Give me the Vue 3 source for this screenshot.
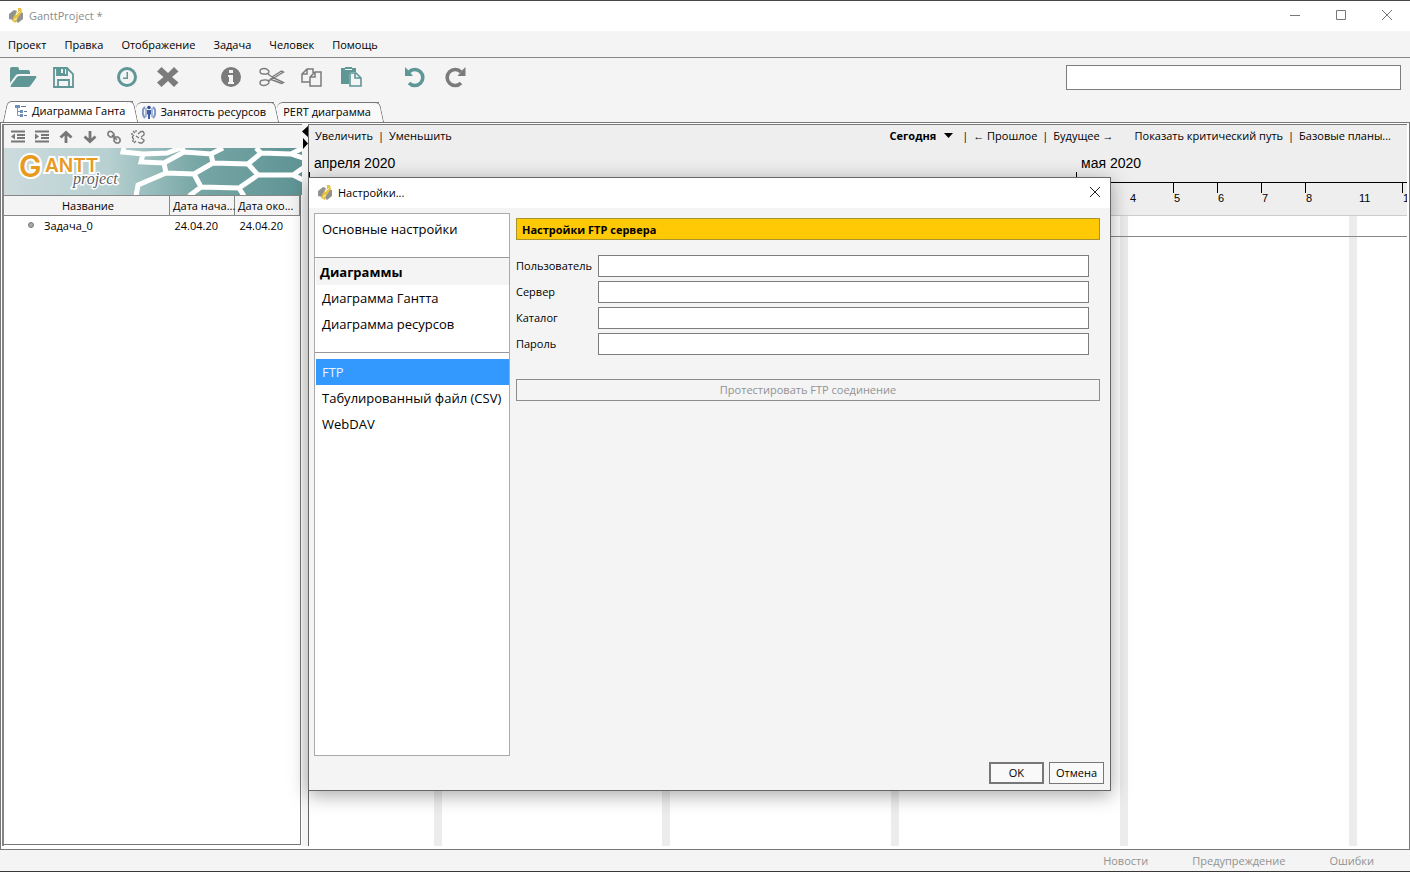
<template>
  <div class="window">
    <header class="title-bar">
      <svg class="app-icon" viewBox="0 0 16 16">
        <path d="M1 6 6 2l3 1-4 9-4-1z" fill="#92928e" />
        <path d="M11 4l4 1v6l-5 4-2-2z" fill="#92928e" />
        <path d="M10 0h3l1 4-5 7-1 4-4-2 2-5 4-4z" fill="#e6c243" />
        <path d="M8 7l4-4M6 12l3-2" stroke="#fff3b8" stroke-width="1" />
      </svg>
      <h1 class="title">GanttProject *</h1>
      <div class="window-buttons">
        <button aria-label="Свернуть"><svg viewBox="0 0 12 12"><path d="M1 5.500h10" /></svg></button>
        <button aria-label="Развернуть"><svg viewBox="0 0 12 12"><path d="M1.500 .5h9v9h-9z" /></svg></button>
        <button aria-label="Закрыть"><svg viewBox="0 0 12 12"><path d="M1 0l10 10M11 0L1 10" /></svg></button>
      </div>
    </header>

    <nav class="menu-bar">
      <button v-for="item in menu" :key="item">{{ item }}</button>
    </nav>

    <div class="toolbar">
      <div v-for="(group, i) in tools" :key="i" class="tool-group">
        <button v-for="tool in group" :key="tool.label" :class="['tool', tool.tone]" :aria-label="tool.label">
          <svg viewBox="0 0 28 24">
            <path v-for="(d, j) in tool.fill" :key="'f' + j" :d="d" fill="currentColor" fill-rule="evenodd" />
            <path v-for="(d, j) in tool.line" :key="'l' + j" :d="d" fill="none" stroke="currentColor" :stroke-width="tool.width || 2" />
          </svg>
        </button>
      </div>
      <input v-model="search" class="search" type="text" aria-label="Поиск" />
    </div>

    <div class="tabs">
      <button class="tab active">
        <svg class="tab-icon" viewBox="0 0 14 14">
          <path d="M3.500 3v8.500h3M3.500 7.500h3" fill="none" stroke="#7d93ad" />
          <path d="M1 1h5v3H1zM6 6h3v3H6zM6 10h3v3H6z" fill="#6d8fb8" />
          <path d="M7 2.500h5M10 7.500h3M10 11.500h3" stroke="#66788e" />
        </svg>
        Диаграмма Ганта
      </button>
      <button class="tab">
        <svg class="tab-icon" viewBox="0 0 14 14">
          <path d="M3 2C0 4 0 10 3 13M11 2C14 4 14 10 11 13" fill="none" stroke="#7e94c4" stroke-width="2" />
          <path d="M4 3v9M10 3v9" stroke="#a8b9dd" stroke-width="2" />
          <circle cx="7" cy="2.500" r="1.800" fill="#304d8c" />
          <path d="M5 5h4v4l-1 1v4H6v-4L5 9z" fill="#3f5fa6" />
        </svg>
        Занятость ресурсов
      </button>
      <button class="tab">PERT диаграмма</button>
    </div>

    <main class="workspace">
      <section class="task-pane">
        <div class="task-tools">
          <button v-for="tool in taskTools" :key="tool.label" :aria-label="tool.label">
            <svg viewBox="0 0 16 16">
              <path :d="tool.d" fill="none" stroke="#777" :stroke-width="tool.width" />
              <path v-if="tool.fill" :d="tool.fill" fill="#777" />
            </svg>
          </button>
        </div>
        <svg class="banner" viewBox="0 0 299 47" preserveAspectRatio="xMinYMid slice">
          <defs>
            <linearGradient id="sea" x1="0" x2="1">
              <stop offset="0" stop-color="#cddbdd" />
              <stop offset="0.35" stop-color="#b7d0d1" />
              <stop offset="0.65" stop-color="#76a6a5" />
              <stop offset="1" stop-color="#5f9494" />
            </linearGradient>
          </defs>
          <rect width="299" height="47" fill="url(#sea)" />
          <path
            d="M120 0l-1 4 20 2-2 8 23 1 20-11-2-4M139 6l24-1 14-5M180 4l27 2 12-6M160 15l2 10-28 12-2 11M162 25l28 1 19-11-2-9M209 15l35 1 13-11-5-5M257 5l30 1 12-6M287 6l12 4M244 16l10 11h35l10-7M289 27l10 5M254 27l-19 13-38-1-7-13M197 39l-12 9M235 40l5 8"
            fill="none" stroke="#fff" stroke-width="5" />
          <text class="logo-main logo-initial" x="15" y="29">G</text>
          <text class="logo-main" x="41" y="24">ANTT</text>
          <text class="logo-sub" x="69" y="36">project</text>
        </svg>
        <div class="task-table">
          <table>
            <thead>
              <tr>
                <th class="name">Название</th>
                <th>Дата нача...</th>
                <th>Дата око...</th>
              </tr>
            </thead>
            <tbody>
              <tr v-for="task in tasks" :key="task.name">
                <td class="name"><i class="bullet"></i>{{ task.name }}</td>
                <td>{{ task.start }}</td>
                <td>{{ task.end }}</td>
              </tr>
            </tbody>
          </table>
        </div>
      </section>

      <div class="divider">
        <svg viewBox="0 0 6 24"><path d="M6 0v11L0 5.500zM1 12v11l5-5.500z" /></svg>
      </div>

      <section class="chart-pane">
        <div class="chart-tools">
          <a href="#">Увеличить</a><span class="bar">|</span><a href="#">Уменьшить</a>
          <a href="#" class="today">Сегодня<svg viewBox="0 0 10 6"><path d="M1 0h9L5.500 5z" /></svg></a>
          <span class="bar">|</span><a href="#">← Прошлое</a><span class="bar">|</span><a href="#">Будущее →</a>
          <a href="#" class="critical">Показать критический путь</a><span class="bar">|</span><a href="#">Базовые планы...</a>
        </div>
        <div class="timeline">
          <div class="months">
            <span v-for="m in months" :key="m.label" class="month" :style="{ left: m.x + 'px' }">{{ m.label }}</span>
          </div>
          <div class="days">
            <span v-for="d in days" :key="d.label" :class="['day', { tick: d.tick }]" :style="{ left: d.x + 'px' }">{{ d.label }}</span>
          </div>
        </div>
        <div class="chart">
          <i v-for="x in weekends" :key="x" class="weekend" :style="{ left: x + 'px' }"></i>
          <div class="chart-row"></div>
        </div>
      </section>
    </main>

    <footer class="status-bar">
      <button>Новости</button>
      <button>Предупреждение</button>
      <button>Ошибки</button>
    </footer>

    <div class="dialog" role="dialog" aria-labelledby="dialog-title">
      <div class="dialog-title">
        <svg class="app-icon" viewBox="0 0 16 16">
          <path d="M1 6 6 2l3 1-4 9-4-1z" fill="#92928e" />
          <path d="M11 4l4 1v6l-5 4-2-2z" fill="#92928e" />
          <path d="M10 0h3l1 4-5 7-1 4-4-2 2-5 4-4z" fill="#e6c243" />
          <path d="M8 7l4-4M6 12l3-2" stroke="#fff3b8" stroke-width="1" />
        </svg>
        <h2 id="dialog-title">Настройки...</h2>
        <button class="dialog-close" aria-label="Закрыть"><svg viewBox="0 0 12 12"><path d="M1 0l10 10M11 0L1 10" /></svg></button>
      </div>
      <div class="dialog-body">
        <nav class="pages">
          <div v-for="(section, i) in sections" :key="i" class="section">
            <h3 v-if="section.title">{{ section.title }}</h3>
            <button v-for="page in section.pages" :key="page" :class="['page', { selected: page === current }]" @click="current = page">
              {{ page }}
            </button>
          </div>
        </nav>
        <form class="settings" @submit.prevent>
          <h3 class="settings-title">Настройки FTP сервера</h3>
          <div class="fields">
            <template v-for="field in fields" :key="field.id">
              <label :for="field.id">{{ field.label }}</label>
              <input :id="field.id" v-model="field.value" :type="field.type" />
            </template>
          </div>
          <button class="test" type="button" disabled>Протестировать FTP соединение</button>
        </form>
      </div>
      <div class="dialog-actions">
        <button class="ok">OK</button>
        <button>Отмена</button>
      </div>
    </div>
  </div>
</template>

<script setup>
import { ref } from 'vue'

const menu = ['Проект', 'Правка', 'Отображение', 'Задача', 'Человек', 'Помощь']
const search = ref('')
const current = ref('FTP')

const tools = [
  [
    {
      label: 'Открыть',
      tone: 'teal',
      fill: ['M1 18V4q0-2 2-2h5q2 0 2 2v1h9q2 0 2 2v2H10q-2 0-3 1z', 'M10 11h17q1 0 0 2l-5 7q-1 2-3 2H2q-1 0 0-2l6-8q1-1 2-1z']
    },
    {
      label: 'Сохранить',
      tone: 'teal',
      width: 1.8,
      fill: ['M8 2h8v8H8zM12 4v4h2V4z'],
      line: ['M5 3h13l6 6v13H5zM9 22v-7h11v7', 'M8 3v7h10V3']
    }
  ],
  [
    { label: 'Новая задача', tone: 'teal', width: 3, line: ['M14 3.500a8.500 8.500 0 1 1 0 17a8.500 8.500 0 1 1 0-17z'], fill: ['M13.500 7H15v7h-5v-1.500h3.500z'] },
    { label: 'Удалить', tone: 'gray', fill: ['M4 6.500L8.500 2l6.500 6L21 2l4.500 4.500L19 12l6.500 5.500L21 22l-6-6-6.500 6L4 17.500 10.500 12z'] }
  ],
  [
    { label: 'Свойства', tone: 'gray', fill: ['M14 2a10 10 0 1 1 0 20a10 10 0 1 1 0-20zM12 5v3h4V5zM11 10v2h1v5h-1v2h6v-2h-1v-7z'] },
    {
      label: 'Вырезать',
      tone: 'gray',
      width: 1.4,
      line: [
        'M7 3.500c3 0 5 2 5 3.500s-3 2.500-5 2C4 9 3 7.500 3 6.200S4.500 3.500 7 3.500z',
        'M7 20.500c3 0 5-2 5-3.500s-3-2.500-5-2c-3 0-4 1.500-4 2.800s1.500 2.700 4 2.700z',
        'M11 9l4 3 9.500-6 2 1L16 13.500 11 16M15 12l11.500 5.500-2 1L13 14'
      ]
    },
    { label: 'Копировать', tone: 'gray', width: 1.5, line: ['M13 17H5V9l5-5h6v4M5 9h5V4', 'M13 21V12l5-5h6v14zM13 12h5V7'] },
    { label: 'Вставить', tone: 'teal', width: 1.6, fill: ['M4 3h4V2h7v1h4v4h-5l-2 2v10H4zM8 4v1h7V4z'], line: ['M13 21V8h6l5 5v8zM18 8v5h6'] }
  ],
  [
    { label: 'Отменить', tone: 'teal', width: 3.6, line: ['M8 7a8 8 0 1 1 0 11'], fill: ['M4 2l3 3 5 6H4z'] },
    { label: 'Повторить', tone: 'gray', width: 3.6, line: ['M20 7a8 8 0 1 0 0 11'], fill: ['M24.500 2l-3 3-5 6h8z'] }
  ]
]

const taskTools = [
  { label: 'Сдвинуть влево', width: 1.8, d: 'M1 2.500h14M7 6h8M7 9h8M1 12.500h14', fill: 'M5 4.500v6l-4-3z' },
  { label: 'Сдвинуть вправо', width: 1.8, d: 'M1 2.500h14M7 6h8M7 9h8M1 12.500h14', fill: 'M1 4.500v6l4-3z' },
  { label: 'Вверх', width: 2.8, d: 'M8 14V4M2.500 8.500L8 3.500l5.500 5' },
  { label: 'Вниз', width: 2.8, d: 'M8 2v10M2.500 7.500L8 12.500l5.500-5' },
  { label: 'Связать', width: 1.6, d: 'M3 2.500h2.500L8 5v2L6.500 8H4L2 6V4zM9.500 8H12l2 2v2.500L12.500 14H10l-2-2V9.500zM6 6l5 5' },
  { label: 'Разорвать связь', width: 1.3, d: 'M4 6L2.500 7.500V9L4 10.500M8 5l3-2.500h2L14 4v2l-3 2M6 7l3 2M8 13l2 1h2l2-2v-1L11 9M3 2l2 2M6 1v2M1 5h2M4 14l2-2M2 12h2' }
]

const tasks = ref([{ name: 'Задача_0', start: '24.04.20', end: '24.04.20' }])

// offsets on the timeline, counted from the left edge of the chart
const months = [
  { label: 'апреля 2020', x: 0 },
  { label: 'мая 2020', x: 767 }
]
const days = [
  { label: '4', x: 820 },
  { label: '5', x: 864, tick: true },
  { label: '6', x: 908, tick: true },
  { label: '7', x: 952, tick: true },
  { label: '8', x: 996, tick: true },
  { label: '11', x: 1049 },
  { label: '12', x: 1093, tick: true }
]
const weekends = [125, 353, 582, 811, 1040]

const sections = [
  { pages: ['Основные настройки'] },
  { title: 'Диаграммы', pages: ['Диаграмма Гантта', 'Диаграмма ресурсов'] },
  { pages: ['FTP', 'Табулированный файл (CSV)', 'WebDAV'] }
]

const fields = ref([
  { id: 'user', label: 'Пользователь', type: 'text', value: '' },
  { id: 'server', label: 'Сервер', type: 'text', value: '' },
  { id: 'folder', label: 'Каталог', type: 'text', value: '' },
  { id: 'password', label: 'Пароль', type: 'password', value: '' }
])
</script>

<style>
body {
  margin: 0;
  overflow: hidden;
}
</style>

<style scoped>
.window {
  position: relative;
  display: flex;
  flex-direction: column;
  height: 100vh;
  box-sizing: border-box;
  border-top: 1px solid #4a4648;
  border-bottom: 1px solid #3a3836;
  background: #f4f4f4;
  color: #000;
  font: 11px/16px "Open Sans", "Noto Sans", sans-serif;
}

button {
  padding: 0;
  border: 0;
  background: none;
  color: inherit;
  font: inherit;
  white-space: nowrap;
}

input {
  box-sizing: border-box;
  border: 1px solid #7d7d7d;
  background: #fff;
  font: inherit;
}

h1,
h2,
h3 {
  margin: 0;
  font: inherit;
}

a {
  color: inherit;
  text-decoration: none;
}

svg {
  display: block;
}

.title-bar {
  display: flex;
  align-items: center;
  height: 30px;
  padding-left: 8px;
  background: #fff;
}

.app-icon {
  width: 16px;
  height: 16px;
}

.title {
  margin-left: 5px;
  color: #8c8c8c;
}

.window-buttons {
  display: flex;
  margin-left: auto;
}

.window-buttons button {
  display: flex;
  justify-content: center;
  width: 46px;
}

.window-buttons svg {
  width: 12px;
  height: 12px;
  fill: none;
  stroke: #777;
}

.menu-bar {
  display: flex;
  gap: 18px;
  height: 24px;
  padding: 2px 8px 0;
  border-bottom: 1px solid #888;
}

.toolbar {
  display: flex;
  align-items: center;
  gap: 24px;
  height: 38px;
  padding: 0 9px 0 3px;
}

.tool-group {
  display: flex;
}

.tool {
  display: flex;
  justify-content: center;
  width: 40px;
}

.tool svg {
  width: 28px;
  height: 24px;
}

.teal {
  color: #5f9796;
}

.gray {
  color: #7b7b7b;
}

.search {
  width: 335px;
  height: 25px;
  margin-left: auto;
}

.tabs {
  display: flex;
  align-items: flex-end;
  height: 26px;
  padding-left: 8px;
}

.tab {
  position: relative;
  display: flex;
  align-items: flex-start;
  gap: 4px;
  height: 20px;
  padding: 1px 8px 0 6px;
  margin-right: 3px;
  border-top: 1px solid #777;
  border-top-left-radius: 6px;
  background: #f9f9f9;
}

.tab.active {
  height: 21px;
  background: #fff;
}

.tab::after,
.tab.active::before {
  content: "";
  position: absolute;
  top: -1px;
  bottom: 0;
  width: 6px;
}

.tab::after {
  right: -3px;
  z-index: 1;
  border-top: 1px solid #777;
  border-right: 1px solid #777;
  border-top-right-radius: 5px;
  background: inherit;
  transform: skewX(12deg);
}

.tab.active::before {
  left: -3px;
  border-top: 1px solid #777;
  border-left: 1px solid #777;
  border-top-left-radius: 5px;
  background: #fff;
  transform: skewX(-12deg);
}

.tab-icon {
  position: relative;
  width: 14px;
  height: 14px;
  margin-top: 1px;
}

.workspace {
  flex: 1;
  display: flex;
  min-height: 0;
  padding: 1px 2px 3px 1px;
  border: 1px solid #777;
  background: #fff;
}

.task-pane {
  display: flex;
  flex-direction: column;
  width: 300px;
  box-sizing: border-box;
  border-left: 2px solid #858585;
  border-top: 1px solid #777;
}

.task-tools {
  display: flex;
  align-items: center;
  height: 23px;
  padding-left: 2px;
  background: #f4f4f4;
}

.task-tools button {
  display: flex;
  justify-content: center;
  width: 24px;
}

.task-tools svg {
  width: 16px;
  height: 16px;
}

.banner {
  width: 100%;
  height: 47px;
}

.logo-main {
  fill: #e79a1d;
  stroke: #fff;
  stroke-width: 4px;
  paint-order: stroke;
  font: 600 19px Inter, sans-serif;
}

.logo-initial {
  font-size: 30px;
}

.logo-sub {
  fill: #5d5f63;
  stroke: #fff;
  stroke-width: 3px;
  paint-order: stroke;
  font: italic 16px "Liberation Serif", serif;
}

.task-table {
  flex: 1;
  margin: 0 1px 1px 0;
  border-right: 1px solid #777;
  border-bottom: 1px solid #777;
}

table {
  width: 100%;
  border-collapse: collapse;
  table-layout: fixed;
}

th,
td {
  width: 65px;
  height: 20px;
  box-sizing: border-box;
  padding: 1px 0 0 5px;
  text-align: left;
  font-weight: normal;
  white-space: nowrap;
}

th {
  padding-left: 3px;
  border: 1px solid #888;
  border-left: 0;
  background: #f4f4f4;
}

.name {
  width: auto;
}

th.name {
  text-align: center;
}

td.name {
  padding-left: 24px;
}

.bullet {
  display: inline-block;
  width: 4px;
  height: 4px;
  margin-right: 10px;
  border: 1px solid #777;
  border-radius: 50%;
  background: #aaa;
  vertical-align: 2px;
}

.divider {
  width: 6px;
  padding-top: 2px;
  background: #f4f4f4;
}

.divider svg {
  width: 6px;
  height: 24px;
}

.chart-pane {
  flex: 1;
  display: flex;
  flex-direction: column;
  min-width: 0;
  overflow: hidden;
  border-left: 1px solid #666;
  border-top: 1px solid #777;
}

.chart-tools {
  display: flex;
  align-items: center;
  height: 22px;
  padding: 0 16px 0 6px;
  background: #eee;
  white-space: nowrap;
}

.bar {
  width: 16px;
  text-align: center;
}

.today {
  display: flex;
  align-items: center;
  gap: 7px;
  margin-left: auto;
  padding-right: 4px;
  font-weight: bold;
}

.today svg {
  width: 10px;
  height: 6px;
}

.critical {
  margin-left: 21px;
}

.timeline {
  border-bottom: 1px solid #ccc;
  background: #eee;
  font-family: "Liberation Sans", sans-serif;
}

.months {
  position: relative;
  height: 35px;
  border-bottom: 1px solid #000;
  font-size: 14px;
}

.month {
  position: absolute;
  top: 8px;
  height: 27px;
  padding-left: 5px;
}

.month::before {
  content: "";
  position: absolute;
  left: 0;
  bottom: 0;
  height: 10px;
  border-left: 1px solid #000;
}

.days {
  position: relative;
  height: 32px;
}

.day {
  position: absolute;
  top: 0;
  padding: 7px 0 0 1px;
}

.day.tick::before {
  content: "";
  position: absolute;
  left: 0;
  top: 0;
  height: 10px;
  border-left: 1px solid #000;
}

.chart {
  position: relative;
  flex: 1;
  overflow: hidden;
}

.weekend {
  position: absolute;
  top: 0;
  bottom: 0;
  width: 8px;
  background: #ececec;
}

.chart-row {
  position: relative;
  height: 20px;
  border-bottom: 1px solid #888;
}

.status-bar {
  display: flex;
  align-items: center;
  justify-content: flex-end;
  gap: 44px;
  height: 21px;
  padding-right: 36px;
  color: #929292;
}

/* settings window floats over the workspace */
.dialog {
  position: absolute;
  top: 176px;
  right: 299px;
  bottom: 80px;
  left: 308px;
  display: flex;
  flex-direction: column;
  border: 1px solid #666;
  background: #f4f4f4;
  box-shadow: 0 4px 18px rgba(0, 0, 0, 0.35);
}

.dialog-title {
  display: flex;
  align-items: center;
  height: 30px;
  padding: 0 9px 0 8px;
  background: #fff;
}

.dialog-title h2 {
  margin-left: 5px;
}

.dialog-close {
  margin-left: auto;
}

.dialog-close svg {
  width: 12px;
  height: 12px;
  stroke: #222;
}

.dialog-body {
  flex: 1;
  display: flex;
  gap: 6px;
  min-height: 0;
  padding: 5px 10px 6px 5px;
}

.pages {
  width: 194px;
  border: 1px solid #aaa;
  background: #fff;
  font-size: 13px;
}

.section {
  display: flex;
  flex-direction: column;
  padding: 0 0 15px 1px;
}

.section:first-child {
  padding-top: 2px;
}

.section + .section {
  border-top: 1px solid #999;
}

.section:last-child {
  padding-top: 6px;
}

.section h3 {
  padding: 6px 4px 5px;
  background: #f4f4f4;
  font-weight: bold;
}

.page {
  padding: 5px 6px;
  text-align: left;
}

.page.selected {
  background: #3399ff;
  color: #e6f5ff;
}

.settings {
  flex: 1;
  padding-top: 5px;
}

.settings-title {
  padding: 3px 5px 1px;
  border: 1px solid #a8932c;
  background: #ffc905;
  font-weight: bold;
}

.fields {
  display: grid;
  grid-template-columns: 78px 1fr;
  align-items: center;
  gap: 4px;
  margin: 15px 11px 24px 0;
}

.fields input {
  width: 100%;
  height: 22px;
}

.test {
  width: 100%;
  height: 22px;
  border: 1px solid #8c8c8c;
  color: #929292;
}

.dialog-actions {
  display: flex;
  justify-content: flex-end;
  gap: 5px;
  padding: 0 6px;
  margin-bottom: 6px;
}

.dialog-actions button {
  min-width: 55px;
  height: 22px;
  padding: 0 6px;
  border: 1px solid #777;
  background: #f9f9f9;
}

.dialog-actions .ok {
  border-width: 2px;
}
</style>
